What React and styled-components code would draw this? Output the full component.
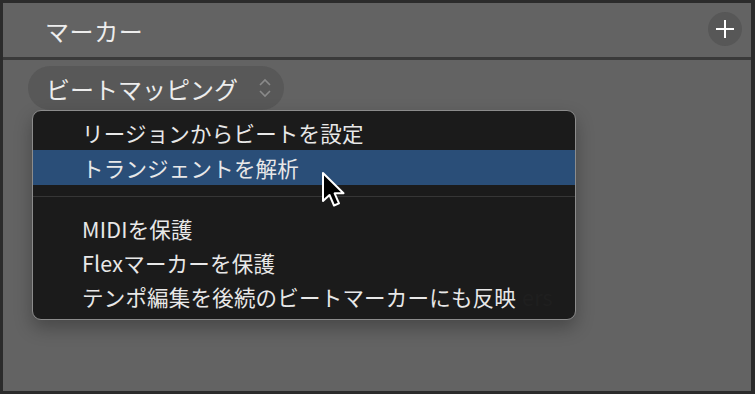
import React from 'react';
import styled, { createGlobalStyle } from 'styled-components';

const Global = createGlobalStyle`
    body {
        margin: 0;
        background: #636363;
    }
    * { box-sizing: border-box; }
`;

const Frame = styled.div`
    width: 755px;
    height: 394px;
    background: #636363;
    border-style: solid;
    border-color: #2b2b2b;
    border-width: 3px 4px 3px 3px;
    display: flex;
    flex-direction: column;
    font-family: "Noto Sans CJK JP", "Noto Sans", sans-serif;
    color: #ededed;
    overflow: hidden;
`;

const Header = styled.div`
    height: 57px;
    flex: none;
    display: flex;
    align-items: center;
    justify-content: space-between;
    padding: 0 9px 0 42px;
    border-bottom: 3px solid #3a3a3a;
`;

const Title = styled.div`
    font-size: 24px;
    letter-spacing: 0.6px;
    line-height: 1;
    margin-top: 2px;
`;

const RoundButton = styled.div`
    width: 34px;
    height: 34px;
    border-radius: 50%;
    background: #575757;
    display: flex;
    align-items: center;
    justify-content: center;
    margin-top: -2px;
`;

const Body = styled.div`
    padding: 6px 0 0 25px;
    display: flex;
    flex-direction: column;
    align-items: flex-start;
`;

const Popup = styled.div`
    height: 44px;
    border-radius: 22px;
    background: #585858;
    display: inline-flex;
    align-items: center;
    gap: 20px;
    padding: 0 12px 0 18px;
    font-size: 24px;
`;

const Menu = styled.div`
    position: relative;
    margin: 0 0 0 4px;
    width: 544px;
    background: #1b1b1b;
    border: 1px solid #8c8c8c;
    border-radius: 9px;
    padding: 4px 0 6px;
    box-shadow: 0 8px 18px rgba(0, 0, 0, 0.28);
`;

const Item = styled.div`
    height: ${p => p.h || 34}px;
    display: flex;
    align-items: center;
    padding-left: 49px;
    font-size: 21.5px;
    letter-spacing: 0.2px;
    color: #e8e8e8;
    background: ${p => (p.active ? '#2a4e78' : 'transparent')};
`;

const Ghost = styled.span`
    color: #1f1f1f;
    margin-left: 6px;
`;

const Separator = styled.div`
    height: 1px;
    margin: 11px 0 14px;
    background: #363636;
`;

const Cursor = styled.svg`
    position: absolute;
    left: 288px;
    top: 60px;
`;

const Plus = () => (
    <svg width="20" height="20" viewBox="0 0 20 20">
        <path d="M10 1v18M1 10h18" stroke="#fff" strokeWidth="2" />
    </svg>
);

const Chevrons = () => (
    <svg width="14" height="20" viewBox="0 0 14 20">
        <path d="M2 7l5-5 5 5M2 13l5 5 5-5" stroke="#8a8a8a" strokeWidth="1.6" fill="none" />
    </svg>
);

export default function App() {
    return (
        <>
            <Global />
            <Frame>
                <Header>
                    <Title>マーカー</Title>
                    <RoundButton><Plus /></RoundButton>
                </Header>
                <Body>
                    <Popup>
                        ビートマッピング
                        <Chevrons />
                    </Popup>
                    <Menu>
                        <Item h={35}>リージョンからビートを設定</Item>
                        <Item h={35} active>トランジェントを解析</Item>
                        <Separator />
                        <Item>MIDIを保護</Item>
                        <Item>Flexマーカーを保護</Item>
                        <Item>テンポ編集を後続のビートマーカーにも反映<Ghost>ers</Ghost></Item>
                        <Cursor width="28" height="38" viewBox="0 0 28 38">
                            <path
                                d="M2 2 L2 30 L8.5 24 L13 34.5 L18 32.3 L13.6 22.3 L22.5 22.3 Z"
                                fill="#000"
                                stroke="#fff"
                                strokeWidth="2"
                                strokeLinejoin="round"
                            />
                        </Cursor>
                    </Menu>
                </Body>
            </Frame>
        </>
    );
}
